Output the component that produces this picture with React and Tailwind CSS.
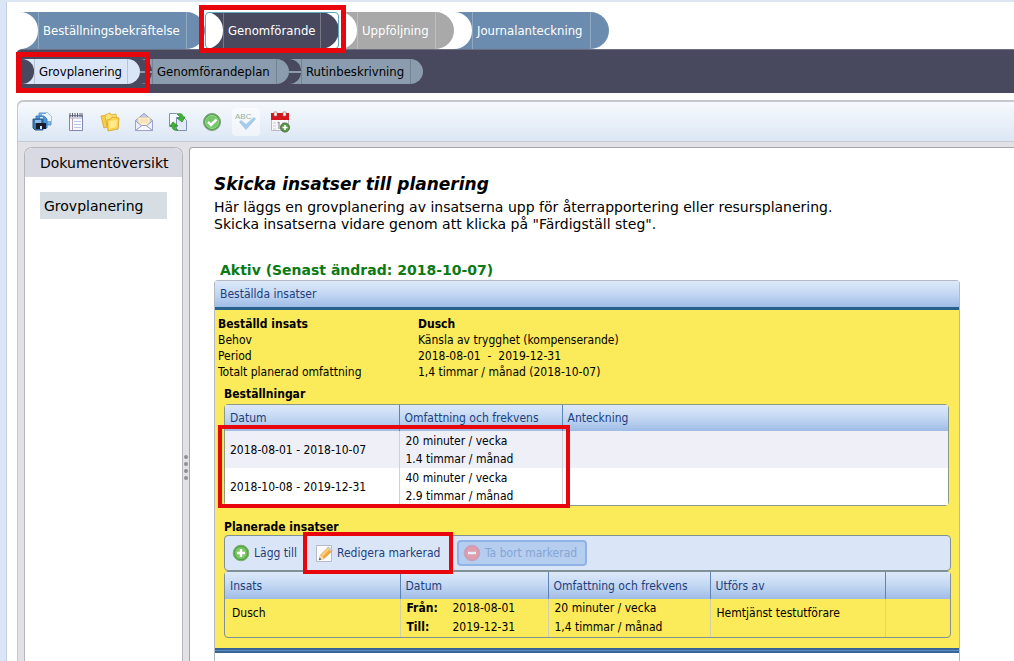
import React from "react";

const tahoma = "font-['DejaVu_Sans_Condensed','DejaVu_Sans',sans-serif]";

function SaveAllIcon() {
  return (
    <svg width="20" height="20" viewBox="0 0 20 20" aria-hidden="true">
      <path d="M7 1h9l3 3v9H7z" fill="#7db4e8" stroke="#5f97cc" />
      <path d="M10 2h4v4h-4zM14 1h2l3 3v5h-5z" fill="#eaf4fd" />
      <path d="M4 4h8l3 3v9H4z" fill="#4f93d2" stroke="#3f7fbe" />
      <path d="M8 5h3v3H8z" fill="#cfe4f7" />
      <path d="M1 7h10v11H3l-2-2z" fill="#3a78b5" stroke="#2a5a8c" />
      <path d="M3 8h6v3H3z" fill="#8fbde8" />
      <path d="M4 11h10v6H4z" fill="#171d2a" />
      <path d="M8 14h2v3H8z" fill="#d8e6f3" />
    </svg>
  );
}

function NotepadIcon() {
  return (
    <svg width="20" height="20" viewBox="0 0 20 20" aria-hidden="true">
      <path d="M3.500 3.500h13v15h-13z" fill="#f9fafe" stroke="#8086b6" />
      <path d="M4 4h12v3H4z" fill="#cfd2da" />
      <path d="M4 1v4M6.500 1v4M9 1v4M11.500 1v4M14 1v4M16 1v4" stroke="#5d5d65" />
      <path d="M6.500 6v12" stroke="#b9a0b8" />
      <path d="M8 9.500h7M8 12.500h7M8 15.500h7" stroke="#b9c6ea" />
    </svg>
  );
}

function FoldersIcon() {
  return (
    <svg width="20" height="20" viewBox="0 0 20 20" aria-hidden="true">
      <path d="M1 4l7-1 2 11-6 2z" fill="#f7cf47" stroke="#dcae35" />
      <path d="M5 3l5-2 1 2 5-1 1 10-10 3z" fill="#fde27a" stroke="#dfb340" />
      <path d="M7 8l4-1 1-2 7 1-1 11-10 2z" fill="#fcd64b" stroke="#dcae35" />
      <path d="M9 9l8-1-1 7-7 2z" fill="#ffe98c" />
    </svg>
  );
}

function MailIcon() {
  return (
    <svg width="20" height="20" viewBox="0 0 20 20" aria-hidden="true">
      <path d="M1.500 8.500L10 1.500l8.500 7v10h-17z" fill="#c9cfea" stroke="#8f95c2" />
      <path d="M4 5.500h12v6l-6 3.500-6-3.500z" fill="#fdeec9" stroke="#e0d0aa" />
      <path d="M6 8h8M6 10h8" stroke="#ead9ae" />
      <path d="M1.500 9l6.500 5-6.500 4.500zM18.500 9L12 14l6.500 4.500z" fill="#eef1fb" stroke="#9ba1cb" />
      <path d="M1.500 18.500L8 13.500h4l6.500 5z" fill="#f8f9fe" stroke="#9ba1cb" />
    </svg>
  );
}

function SwapIcon() {
  return (
    <svg width="20" height="20" viewBox="0 0 20 20" aria-hidden="true">
      <path d="M1.500 1.500h7l3 3v10h-10z" fill="#f5f8ff" stroke="#7f90b8" />
      <path d="M8.500 5.500h7l3 3v10h-10z" fill="#e3ebfb" stroke="#7f90b8" />
      <path d="M9 2c4-1 6 0 6 3h2l-3 5-5-4h3c0-2-1-3-3-4z" fill="#43b335" stroke="#2f9128" strokeWidth=".8" />
      <path d="M10 18c-4 1-6-1-6-4H2l3-4 5 4H7c0 2 1 3 3 4z" fill="#43b335" stroke="#2f9128" strokeWidth=".8" />
    </svg>
  );
}

function ApproveIcon() {
  return (
    <svg width="20" height="20" viewBox="0 0 20 20" aria-hidden="true">
      <circle cx="10" cy="10" r="8.500" fill="#4eaa48" stroke="#8a9a89" />
      <circle cx="10" cy="10" r="6.500" fill="#74c768" stroke="#97d98c" />
      <path d="M6 10l3 3 5.500-5.500" fill="none" stroke="#fff" strokeWidth="2.500" />
    </svg>
  );
}

function SpellIcon() {
  return (
    <svg width="24" height="22" viewBox="0 0 24 22" aria-hidden="true">
      <text x="1" y="8" fontSize="8" fontFamily="Liberation Sans, sans-serif" fill="#8fb39a">ABC</text>
      <path d="M5 11l2-2 5 4 8-7 2 2-10 11z" fill="#a9cbea" />
    </svg>
  );
}

function CalendarIcon() {
  return (
    <svg width="22" height="22" viewBox="0 0 22 22" aria-hidden="true">
      <path d="M2.500 4.500h17v15h-17z" fill="#f7f7f9" stroke="#b9b9c0" />
      <path d="M2 2h18v7H2z" fill="#d5151c" />
      <path d="M5 1h3v4H5zM14 1h3v4h-3z" fill="#fff" stroke="#a85a5a" strokeWidth=".6" />
      <path d="M4 12h3M4 15h3M4 18h3M13 12h3" stroke="#c9c9d2" />
      <path d="M8.500 12l1.500-1v7" fill="none" stroke="#7d7d88" />
      <circle cx="16" cy="16.500" r="4.500" fill="#5a9a4b" stroke="#4c6b45" />
      <path d="M16 14v5M13.500 16.500h5" stroke="#fff" strokeWidth="1.600" />
    </svg>
  );
}

function AddIcon() {
  return (
    <svg width="18" height="18" viewBox="0 0 18 18" aria-hidden="true">
      <circle cx="9" cy="9" r="7.800" fill="#4fa83f" stroke="#7fae78" />
      <circle cx="9" cy="9" r="6" fill="#7cc765" />
      <path d="M9 5v8M5 9h8" stroke="#fff" strokeWidth="2.400" />
    </svg>
  );
}

function EditIcon() {
  return (
    <svg width="19" height="19" viewBox="0 0 19 19" aria-hidden="true">
      <path d="M1.500 1.500h15v16h-15z" fill="#fbfbfc" stroke="#b4bccb" />
      <path d="M4 16l1.500-5 8-8 4 3.500-8.500 8z" fill="#f1a93c" stroke="#c98f45" strokeWidth=".6" />
      <path d="M6 11l8-8 1.500 1.500-8 8z" fill="#fbd27c" />
      <path d="M12.500 4l1.500-1.500 3.500 3.500-1.500 1.500z" fill="#c9ccd4" />
      <path d="M4 16l1.500-5 3.500 3.500z" fill="#f6dfb4" />
      <path d="M4 16l.8-2.200 1.400 1.400z" fill="#333" />
    </svg>
  );
}

function RemoveIcon() {
  return (
    <svg width="18" height="18" viewBox="0 0 18 18" aria-hidden="true">
      <circle cx="9" cy="9" r="7.800" fill="#d59ab0" stroke="#c3a3bf" />
      <circle cx="9" cy="9" r="6" fill="#dfa0ae" />
      <path d="M5 9h8" stroke="#e8eefa" strokeWidth="2.400" />
    </svg>
  );
}

function Marker({ className }) {
  return (
    <span aria-hidden="true" className={`pointer-events-none absolute z-10 border-[#e8060c] ${className}`} />
  );
}

const steps = [
  { label: "Beställningsbekräftelse", width: "w-[185px]", color: "bg-[#6b8cae]" },
  { label: "Genomförande", width: "w-[134px]", color: "bg-[#48495e]", active: true },
  { label: "Uppföljning", width: "w-[115px]", color: "bg-[#a9a9a9]" },
  { label: "Journalanteckning", width: "w-[155px]", color: "bg-[#6b8cae]" },
];

const subSteps = [
  { label: "Grovplanering", width: "w-[118px]", color: "bg-[#dae5f7]", active: true },
  { label: "Genomförandeplan", width: "w-[149px]", color: "bg-[#8a9cae]" },
  { label: "Rutinbeskrivning", width: "w-[134px]", color: "bg-[#8a9cae]" },
];

const tools = [
  { name: "Spara", Icon: SaveAllIcon },
  { name: "Anteckning", Icon: NotepadIcon },
  { name: "Mappar", Icon: FoldersIcon },
  { name: "Meddelande", Icon: MailIcon },
  { name: "Växla dokument", Icon: SwapIcon },
  { name: "Färdigställ steg", Icon: ApproveIcon },
  { name: "Stavningskontroll", Icon: SpellIcon, disabled: true },
  { name: "Ny bokning", Icon: CalendarIcon },
];

const info = [
  ["Behov", "Känsla av trygghet (kompenserande)"],
  ["Period", "2018-08-01\u00a0 -\u00a0 2019-12-31"],
  ["Totalt planerad omfattning", "1,4 timmar / månad (2018-10-07)"],
];

const orders = [
  { period: "2018-08-01 - 2018-10-07", week: "20 minuter / vecka", month: "1.4 timmar / månad", bg: "bg-[#eeeff7]" },
  { period: "2018-10-08 - 2019-12-31", week: "40 minuter / vecka", month: "2.9 timmar / månad", bg: "bg-white" },
];

const th = "pl-[5px] text-left font-normal text-[#1d3f7c]";
const thSplit = "border-l border-[#5f83b5]";
const cellSplit = "border-l border-[#d3cfa6]";
const headRow = "bg-linear-to-b from-[#dde9f9] via-[#c3d7f3] to-[#9fbce6]";

export default function App() {
  return (
    <div className="flex min-h-screen flex-col border-t-2 border-[#dce6f2] bg-white text-black">
      <div className="flex flex-1 border-l-[6px] border-[#dae6f8]">
        <div className="flex min-w-0 flex-1 flex-col border-l border-[#c3cfe0] pl-[9px]">
          <nav aria-label="Steg" className={`flex h-[47px] items-end pl-1 text-[13px] text-white ${tahoma}`}>
            {steps.map((s) => (
              <div key={s.label} className={`relative h-[37px] ${s.width} ${s.active ? "rounded-sm outline -outline-offset-1 outline-[#5aa9bd]" : ""}`}>
                <a href="#" className={`flex h-full items-stretch rounded-r-full ${s.color}`}>
                  <span className="w-[18px] shrink-0 rounded-r-full bg-white" />
                  <span className="flex flex-1 items-center border-x border-white/25 pl-1 whitespace-nowrap">{s.label}</span>
                  <span className="w-[18px] shrink-0" />
                </a>
                {s.active && <Marker className="-top-[7px] -right-[7px] -bottom-1 -left-[6px] border-[5px]" />}
              </div>
            ))}
          </nav>

          <nav aria-label="Delsteg" className={`flex h-11 items-center rounded-tl-md border-t border-[#6d6e80] bg-[#48495e] pl-[6px] text-[13px] ${tahoma}`}>
            {subSteps.map((s, i) => (
              <div key={s.label} className={`relative h-[25px] ${s.width}`}>
                <a href="#" className={`flex h-full items-stretch rounded-r-full ${s.color}`}>
                  <span className="flex w-3 shrink-0 items-center rounded-r-full bg-[#48495e]">
                    {i > 0 && <span className="h-[2px] w-full bg-[#8a9cae]" />}
                  </span>
                  <span className="flex flex-1 items-center border-x border-black/15 pl-1 whitespace-nowrap">{s.label}</span>
                  <span className="w-3 shrink-0" />
                </a>
                {s.active && <Marker className="-top-[7px] -right-[10px] -bottom-[9px] -left-[6px] border-[5px]" />}
              </div>
            ))}
          </nav>

          <div className="mt-[7px] ml-px flex flex-1 flex-col rounded-tl-md border-t-2 border-l border-[#c6c8cc] bg-[#e2e2e6]">
            <div role="toolbar" aria-label="Verktyg" className="flex h-10 items-center gap-[6px] rounded-tl-md border-b border-[#c3cad6] bg-linear-to-b from-[#f6f9fd] to-[#dce7f4] pl-[10px]">
              {tools.map(({ name, Icon, disabled }) => (
                <button key={name} type="button" aria-label={name} disabled={disabled} className={`flex size-7 items-center justify-center rounded-sm ${disabled ? "bg-white/50" : ""}`}>
                  <Icon />
                </button>
              ))}
            </div>

            <div className="flex flex-1 pt-[5px] pl-[6px] font-['DejaVu_Sans',sans-serif] text-sm">
              <aside className="w-[159px] shrink-0 rounded-t-lg border border-b-0 border-[#b4b6ba] bg-white">
                <h2 className="flex h-[29px] items-center rounded-t-lg bg-[#d8d9e2] pl-[15px]">Dokumentöversikt</h2>
                <a href="#" className="mx-[15px] mt-[15px] flex h-[27px] items-center bg-[#d6dee3] pl-1">Grovplanering</a>
              </aside>

              <div className="flex w-[6px] shrink-0 flex-col items-center gap-[3px] pt-[308px]">
                {[0, 1, 2, 3].map((d) => (
                  <span key={d} className="size-1 rounded-full bg-[#8e9095]" />
                ))}
              </div>

              <main className="flex min-w-0 flex-1 flex-col rounded-tl border-t border-l border-[#a3a6aa] bg-white pt-6 pr-[54px] pl-6">
                <h1 className="text-[17px] leading-6 font-bold italic">Skicka insatser till planering</h1>
                <p className="mt-[3px] leading-[17px]">
                  Här läggs en grovplanering av insatserna upp för återrapportering eller resursplanering.
                  <br />
                  Skicka insatserna vidare genom att klicka på "Färdigställ steg".
                </p>
                <p className="mt-[27px] pl-[6px] leading-5 font-bold text-[#0b7a14]">Aktiv (Senast ändrad: 2018-10-07)</p>

                <section className={`flex flex-1 flex-col rounded-t-sm border border-b-0 border-[#b3bac6] text-xs ${tahoma}`}>
                  <h2 className={`flex h-[26px] items-center pl-[5px] text-[#1d3f7c] ${headRow}`}>Beställda insatser</h2>
                  <div className="border-t-[3px] border-[#28618c] bg-[#fbea5a] pt-[6px] pr-2 pb-[10px] pl-[3px]">
                    <dl className="grid grid-cols-[200px_1fr] leading-4">
                      <dt className="font-bold">Beställd insats</dt>
                      <dd className="font-bold">Dusch</dd>
                      {info.map(([k, v]) => (
                        <React.Fragment key={k}>
                          <dt>{k}</dt>
                          <dd>{v}</dd>
                        </React.Fragment>
                      ))}
                    </dl>

                    <div className="pl-[6px]">
                      <h3 className="pt-[6px] pb-[2px] leading-4 font-bold">Beställningar</h3>
                      <div className="relative mr-[2px] rounded border border-[#8b9a86]">
                        <table className="w-full table-fixed border-collapse">
                          <colgroup>
                            <col className="w-[174px]" />
                            <col className="w-[163px]" />
                            <col />
                          </colgroup>
                          <thead>
                            <tr className={`h-[26px] ${headRow}`}>
                              <th className={th}>Datum</th>
                              <th className={`${th} ${thSplit}`}>Omfattning och frekvens</th>
                              <th className={`${th} ${thSplit}`}>Anteckning</th>
                            </tr>
                          </thead>
                          <tbody>
                            {orders.map((o) => (
                              <tr key={o.period} className={`h-[37px] ${o.bg}`}>
                                <td className="pl-[5px]">{o.period}</td>
                                <td className="border-l border-[#cfd0d8] pl-[6px] leading-[18px]">
                                  {o.week}
                                  <br />
                                  {o.month}
                                </td>
                                <td className="border-l border-[#cfd0d8]" />
                              </tr>
                            ))}
                          </tbody>
                        </table>
                        <Marker className="top-[20px] -bottom-[3px] -left-[7px] w-[352px] border-4" />
                      </div>

                      <h3 className="pt-[13px] leading-4 font-bold">Planerade insatser</h3>
                      <div className="flex h-9 items-center rounded border border-[#7f9097] bg-[#dae6f7] pl-[7px] text-[#1d3f7c]">
                        <button type="button" className="flex items-center gap-1">
                          <AddIcon />
                          Lägg till
                        </button>
                        <div className="relative ml-[6px] flex h-[34px] w-[150px] items-center pl-3">
                          <button type="button" className="flex items-center gap-[3px] whitespace-nowrap">
                            <EditIcon />
                            Redigera markerad
                          </button>
                          <Marker className="inset-x-0 -inset-y-1 border-4" />
                        </div>
                        <button type="button" disabled className="ml-1 flex h-[26px] items-center gap-1 rounded-sm border-2 border-[#8fb3e6] bg-[#b5cdef] pr-2 pl-1 whitespace-nowrap text-[#86a5d4]">
                          <RemoveIcon />
                          Ta bort markerad
                        </button>
                      </div>

                      <div className="rounded border border-[#7f9097]">
                        <table className="w-full table-fixed border-collapse">
                          <colgroup>
                            <col className="w-[175px]" />
                            <col className="w-[148px]" />
                            <col className="w-[162px]" />
                            <col className="w-[175px]" />
                            <col />
                          </colgroup>
                          <thead>
                            <tr className={`h-[27px] ${headRow}`}>
                              <th className={th}>Insats</th>
                              <th className={`${th} ${thSplit}`}>Datum</th>
                              <th className={`${th} ${thSplit}`}>Omfattning och frekvens</th>
                              <th className={`${th} ${thSplit}`}>Utförs av</th>
                              <td className={thSplit} />
                            </tr>
                          </thead>
                          <tbody>
                            <tr className="h-[38px] align-top">
                              <td className="pt-[6px] pl-[7px]">Dusch</td>
                              <td className={`pl-[6px] ${cellSplit}`}>
                                <div className="grid grid-cols-[46px_1fr] leading-[19px]">
                                  <b>Från:</b>
                                  <span>2018-08-01</span>
                                  <b>Till:</b>
                                  <span>2019-12-31</span>
                                </div>
                              </td>
                              <td className={`pl-[6px] leading-[19px] ${cellSplit}`}>
                                20 minuter / vecka
                                <br />
                                1,4 timmar / månad
                              </td>
                              <td className={`pt-[6px] pl-[6px] ${cellSplit}`}>Hemtjänst testutförare</td>
                              <td className={cellSplit} />
                            </tr>
                          </tbody>
                        </table>
                      </div>
                    </div>
                  </div>
                  <div className="h-[5px] shrink-0 border-y-2 border-[#376494] bg-[#5b8cc8]" />
                </section>
              </main>
            </div>
          </div>
        </div>
      </div>
    </div>
  );
}
